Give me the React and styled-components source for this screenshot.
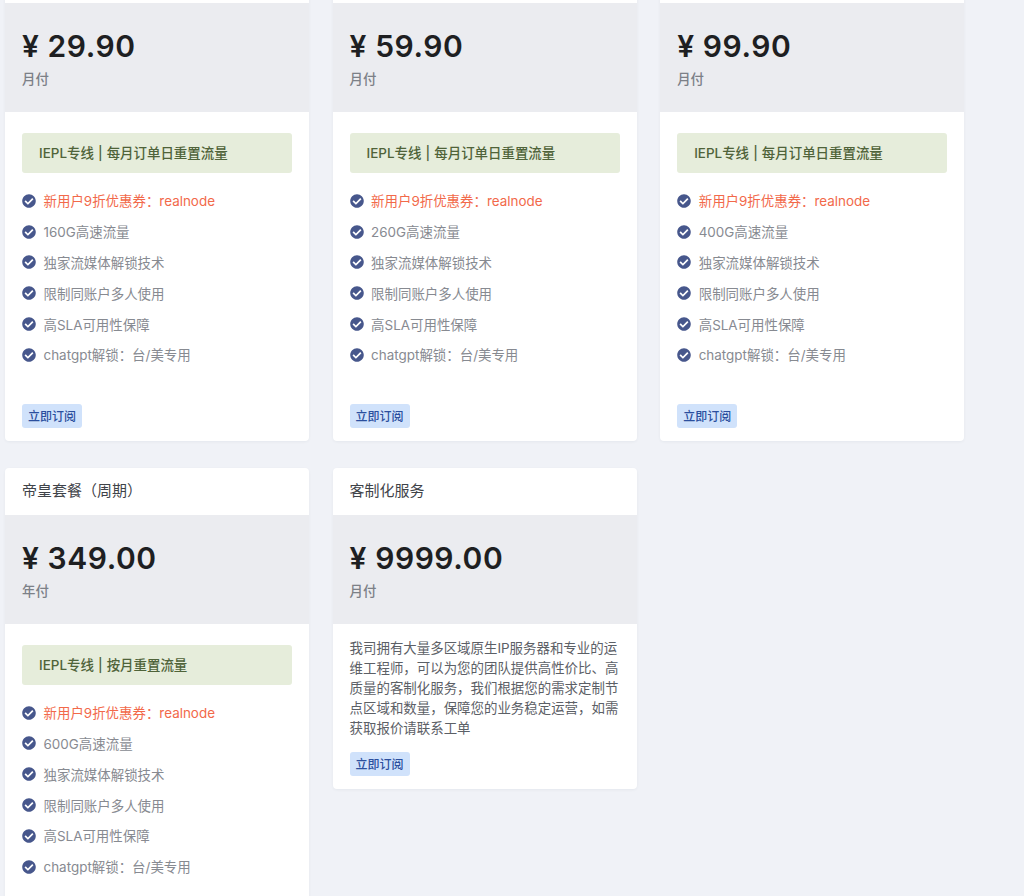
import React from "react";
import styled, { createGlobalStyle } from "styled-components";
import { FaCheckCircle } from "react-icons/fa";

const GlobalStyle = createGlobalStyle`
  html, body {
    margin: 0;
    height: 896px;
    overflow: hidden;
    background: #f0f2f7;
    font-family: Inter, "Noto Sans CJK SC", sans-serif;
  }
`;

const Grid = styled.div`
  display: grid;
  grid-template-columns: repeat(3, 304.3px);
  column-gap: 23.3px;
  row-gap: 27px;
  align-items: start;
  padding-left: 5px;
  margin-top: -44px;
`;

const Card = styled.section`
  background: #fff;
  border-radius: 4px;
  box-shadow: 0 1px 3px rgba(50, 60, 90, 0.06);
  overflow: hidden;
`;

const CardTitle = styled.h3`
  margin: 0;
  height: 47px;
  padding: 0 17px;
  font-size: 15px;
  font-weight: 400;
  line-height: 46px;
  color: #3f4349;
`;

const PriceBlock = styled.div`
  height: 109px;
  box-sizing: border-box;
  padding: 25px 17px 0;
  background: #ebecf0;
`;

const Price = styled.div`
  font-size: 30px;
  font-weight: 600;
  line-height: 36px;
  letter-spacing: 0.55px;
  color: #1e1f22;
`;

const Period = styled.div`
  margin-top: 6px;
  font-size: 13.4px;
  font-weight: 500;
  line-height: 18px;
  color: #7c8087;
`;

const Body = styled.div`
  padding: ${props => (props.$plain ? "14px" : "21px")} 17px 13px;
`;

const Notice = styled.div`
  height: 40px;
  padding: 0 17px;
  border-radius: 3px;
  background: #e6eddb;
  color: #4f6339;
  font-size: 13.44px;
  font-weight: 500;
  line-height: 40px;
  word-spacing: 0.5px;
`;

const Features = styled.ul`
  margin: 12px 0 34px;
  padding: 0;
  list-style: none;
`;

const Feature = styled.li`
  display: flex;
  align-items: center;
  gap: 7.5px;
  height: 30.8px;
  font-size: 13.44px;
  color: ${props => (props.$accent ? "#f2694a" : "#878a91")};

  svg {
    flex: none;
    width: 14px;
    height: 14px;
    margin-top: 1px;
    color: #47578c;
  }
`;

const Description = styled.p`
  margin: 0 0 14px;
  font-size: 13.44px;
  line-height: 20px;
  color: #5c6066;
`;

const SubscribeButton = styled.button`
  display: block;
  width: 60px;
  height: 24px;
  padding: 0;
  border: 0;
  border-radius: 3px;
  background: #d0e2fb;
  color: #2b4f9e;
  font-family: inherit;
  font-size: 12px;
  font-weight: 500;
`;

const coupon = "新用户9折优惠券：realnode";
const features = traffic => [
  `${traffic}高速流量`,
  "独家流媒体解锁技术",
  "限制同账户多人使用",
  "高SLA可用性保障",
  "chatgpt解锁：台/美专用",
];

const monthlyReset = "IEPL专线 | 每月订单日重置流量";

const plans = [
  { title: "", price: "¥ 29.90", period: "月付", notice: monthlyReset, traffic: "160G" },
  { title: "", price: "¥ 59.90", period: "月付", notice: monthlyReset, traffic: "260G" },
  { title: "", price: "¥ 99.90", period: "月付", notice: monthlyReset, traffic: "400G" },
  { title: "帝皇套餐（周期）", price: "¥ 349.00", period: "年付", notice: "IEPL专线 | 按月重置流量", traffic: "600G" },
  {
    title: "客制化服务",
    price: "¥ 9999.00",
    period: "月付",
    description:
      "我司拥有大量多区域原生IP服务器和专业的运维工程师，可以为您的团队提供高性价比、高质量的客制化服务，我们根据您的需求定制节点区域和数量，保障您的业务稳定运营，如需获取报价请联系工单",
  },
];

const Plan = ({ plan }) => (
  <Card>
    <CardTitle>{plan.title}</CardTitle>
    <PriceBlock>
      <Price>{plan.price}</Price>
      <Period>{plan.period}</Period>
    </PriceBlock>
    {plan.description ? (
      <Body $plain>
        <Description>{plan.description}</Description>
        <SubscribeButton>立即订阅</SubscribeButton>
      </Body>
    ) : (
      <Body>
        <Notice>{plan.notice}</Notice>
        <Features>
          <Feature $accent>
            <FaCheckCircle />
            {coupon}
          </Feature>
          {features(plan.traffic).map(text => (
            <Feature key={text}>
              <FaCheckCircle />
              {text}
            </Feature>
          ))}
        </Features>
        <SubscribeButton>立即订阅</SubscribeButton>
      </Body>
    )}
  </Card>
);

const App = () => (
  <>
    <GlobalStyle />
    <Grid>
      {plans.map(plan => (
        <Plan key={plan.price} plan={plan} />
      ))}
    </Grid>
  </>
);

export default App;
